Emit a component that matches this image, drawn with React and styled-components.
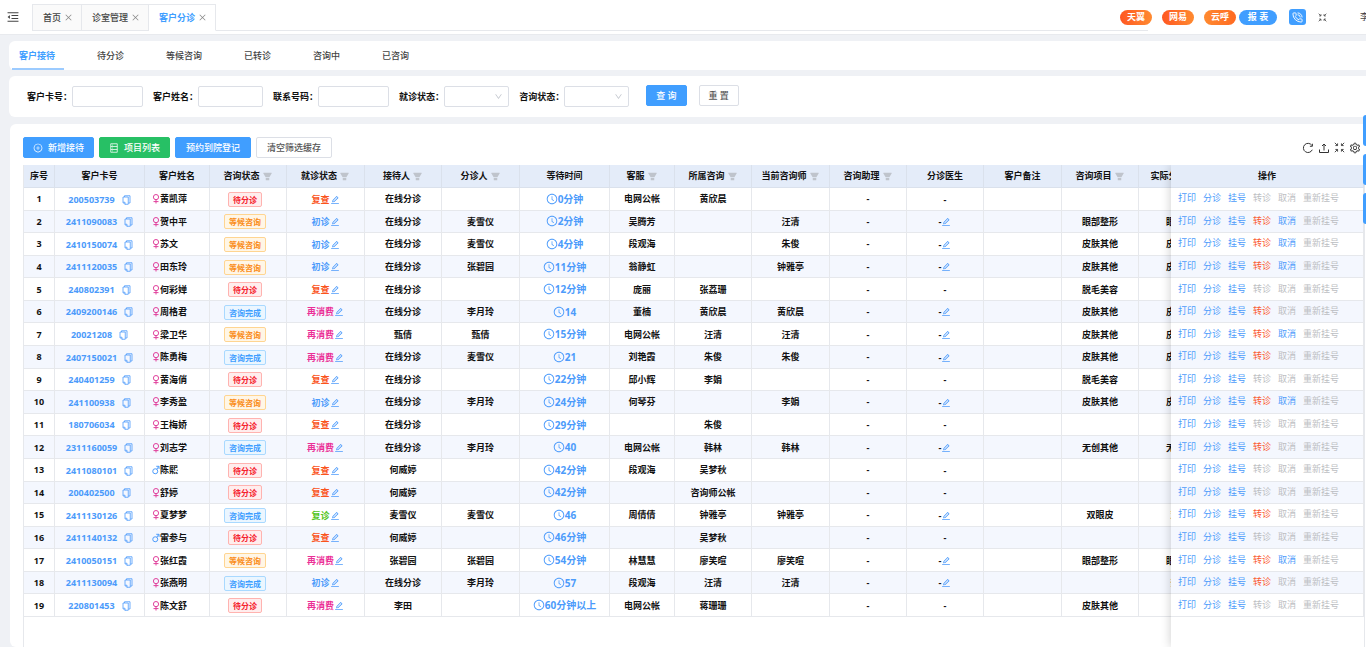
import React from 'react'
import styled, { createGlobalStyle, css } from 'styled-components'
import {
    AiFillFilter,
    AiOutlineClockCircle,
    AiOutlineClose,
    AiOutlineDown,
    AiOutlineEdit,
    AiOutlineMenuFold,
    AiOutlinePlusCircle,
    AiOutlineSetting
} from 'react-icons/ai'
import { PhoneCall } from 'lucide-react'

const BLUE = '#409eff';
const LINK = '#4c9bfb';
const BORDER = '#e6e8ec';

const GlobalStyle = createGlobalStyle`
    * {
        box-sizing: border-box;
    }

    body {
        margin: 0;
        overflow: hidden;
        background: #eff1f5;
        color: #111;
        font-family: 'Noto Sans', 'Noto Sans CJK SC', sans-serif;
        font-size: 9px;
        line-height: 14px;
    }

    button, input, select {
        margin: 0;
        padding: 0;
        border: 0;
        background: none;
        color: inherit;
        font: inherit;
    }

    svg {
        display: block;
        flex: none;
    }
`;

const Page = styled.div`
    display: flex;
    flex-direction: column;
    min-height: 100vh;
`;

/* top bar */

const TopBar = styled.header`
    display: flex;
    align-items: flex-start;
    height: 35px;
    padding: 4px 0 0 6px;
    overflow: hidden;
    background: #fff;
    border-bottom: 1px solid #e8eaee;
`;

const FoldButton = styled.button`
    padding: 6px 0;
    margin-right: 12px;
    color: #444;
`;

const PageTabs = styled.nav`
    display: flex;
    flex: 1;
    height: 27px;
    border-bottom: 1px solid ${BORDER};
`;

const PageTab = styled.div`
    display: flex;
    align-items: center;
    gap: 3px;
    height: 27px;
    padding: 0 8px 0 10px;
    border: 1px solid ${BORDER};
    border-left-width: ${props => props.$first ? '1px' : 0};
    border-bottom-color: ${props => props.$active ? '#fff' : BORDER};
    background: ${props => props.$active ? '#fff' : '#fafafa'};
    color: ${props => props.$active ? BLUE : '#444'};
    font-weight: ${props => props.$active ? 700 : 500};

    svg {
        color: #888;
    }
`;

const TopActions = styled.div`
    display: flex;
    align-items: center;
    flex: none;
    width: 246px;
    height: 26px;
    margin-left: -28px;
    overflow: hidden;
    white-space: nowrap;
`;

const Pill = styled.button`
    flex: none;
    width: ${props => props.$wide ? '38px' : '32px'};
    height: 15px;
    margin-right: ${props => props.$gap}px;
    border-radius: 8px;
    background: ${props => props.$bg};
    color: #fff;
    font-weight: 700;
`;

const PhoneButton = styled.button`
    display: flex;
    align-items: center;
    justify-content: center;
    flex: none;
    width: 17px;
    height: 16px;
    margin-right: 12px;
    border-radius: 3px;
    background: ${BLUE};
    color: #fff;
`;

const IconButton = styled.button`
    flex: none;
    color: #333;
`;

const UserName = styled.span`
    flex: none;
    margin-left: 33px;
    color: #444;
`;

/* cards */

const Card = styled.section`
    margin: 6px 0 0 9px;
    background: #fff;
    border-radius: 6px 0 0 6px;
`;

const StatusTabs = styled(Card)`
    display: flex;
    gap: 26px;
    height: 29px;
    padding-left: 3px;
`;

const StatusTab = styled.button`
    height: 29px;
    padding: 2px 9px 0 7px;
    border-bottom: 2px solid ${props => props.$active ? '#9ccbff' : 'transparent'};
    color: ${props => props.$active ? BLUE : '#444'};
    font-weight: ${props => props.$active ? 700 : 500};
`;

const SearchForm = styled.form`
    display: flex;
    align-items: center;
    height: 41px;
    padding-left: 18px;
`;

const Field = styled.div`
    display: flex;
    align-items: center;
    margin-right: 10px;

    label {
        font-weight: 700;
    }
`;

const control = css`
    height: 21px;
    border: 1px solid #dcdfe6;
    border-radius: 2px;
    background: #fff;
`;

const TextInput = styled.input`
    ${control}
    width: ${props => props.$narrow ? '65px' : '71px'};
    padding: 0 5px;
`;

const SelectWrap = styled.div`
    position: relative;
    color: #c0c4cc;

    svg {
        position: absolute;
        top: 6px;
        right: 6px;
        pointer-events: none;
    }
`;

const SelectBox = styled.select`
    ${control}
    display: block;
    width: 65px;
    padding: 0 5px;
    appearance: none;
`;

const Button = styled.button`
    display: flex;
    align-items: center;
    justify-content: center;
    gap: 5px;
    height: 21px;
    padding: 0 ${props => props.$tight ? '9px' : '10px'};
    border: 1px solid ${props => props.$bg || '#dcdfe6'};
    border-radius: 2px;
    background: ${props => props.$bg || '#fff'};
    color: ${props => props.$bg ? '#fff' : '#555'};
    font-weight: 500;
`;

const FormButtons = styled.div`
    display: flex;
    gap: 12px;
    margin: 0 0 2px 7px;
`;

const TableCard = styled(Card)`
    display: flex;
    flex: 1;
    flex-direction: column;
    margin: 7px 0 0 10px;
    padding: 13px 1px 0 13px;
`;

const Toolbar = styled.div`
    display: flex;
    align-items: center;
    gap: 5px;
    margin-bottom: 7px;
`;

const ToolIcons = styled.div`
    display: flex;
    align-items: center;
    gap: 4px;
    margin-left: auto;
    padding-right: 4px;
`;

/* table */

const Grid = styled.div`
    display: flex;
    flex: 1;
    overflow: hidden;
    border: solid ${BORDER};
    border-width: 0 1px 0 1px;
`;

const GridMain = styled.div`
    flex: 1;
    min-width: 0;
    overflow: hidden;
`;

const GridFixed = styled.div`
    position: relative;
    flex: none;
    width: 193px;
    background: #fff;
    box-shadow: 0 0 10px rgba(0, 0, 0, 0.2);
`;

const Table = styled.table`
    width: ${props => props.$full ? '100%' : '1206px'};
    height: 452px;
    table-layout: fixed;
    border-spacing: 0;
    white-space: nowrap;

    th, td {
        height: 22px;
        padding: 0;
        border-right: 1px solid ${BORDER};
        border-bottom: 1px solid ${BORDER};
        text-align: center;
        font-weight: 700;
    }

    td {
        padding-top: 1px;
    }

    th {
        height: 23px;
        background: #e4ecf9;
        border-color: #dae1ec;
    }

    tbody tr:nth-child(even) {
        background: #f4f7fe;
    }
`;

const Inline = styled.span`
    display: inline-flex;
    align-items: center;
    gap: ${props => props.$gap || 0}px;
    vertical-align: middle;
    color: ${props => props.$color || 'inherit'};
`;

const FilterIcon = styled(AiFillFilter)`
    color: #bfc4cc;
`;

const CardLink = styled.a`
    color: ${LINK};
    text-decoration: none;
`;

const WaitTime = styled(Inline)`
    padding-bottom: 1px;
    color: ${LINK};
    font-size: 10px;
`;

const NameCell = styled.div`
    display: flex;
    align-items: center;
    padding-left: 7px;
`;

const TAGS = {
    待分诊: ['#f5222d', '#ffeded', '#ffb3b0'],
    等候咨询: ['#fa8c16', '#fff6e6', '#ffd591'],
    咨询完成: ['#409eff', '#ebf6ff', '#a9d9ff']
};

const Tag = styled.span`
    display: inline-block;
    height: 15px;
    padding: 0 4px;
    margin-right: 6px;
    border: 1px solid ${props => TAGS[props.$kind][2]};
    border-radius: 2px;
    background: ${props => TAGS[props.$kind][1]};
    color: ${props => TAGS[props.$kind][0]};
    font-size: 8px;
    line-height: 13px;
    vertical-align: middle;
`;

const RowActions = styled.div`
    display: flex;
    gap: 7px;
    padding: 0 0 2px 7px;
    font-weight: 400;
`;

const RowAction = styled.button`
    color: ${props => props.$danger ? '#fb5a30' : LINK};
    line-height: 14px;

    &:disabled {
        color: #bcbec2;
    }
`;

const SideDock = styled.aside`
    position: fixed;
    top: 115px;
    right: 0;
    display: flex;
    flex-direction: column;
    gap: 8px;
`;

const SideTab = styled.button`
    width: 3px;
    height: 31px;
    border-radius: 3px 0 0 3px;
    background: ${BLUE};
`;

/* icons */

const FemaleIcon = () => (
    <svg width="8" height="10" viewBox="0 0 16 20" fill="none" stroke="#e0409c" strokeWidth="2">
        <circle cx="8" cy="6.2" r="5.2" />
        <path d="M8 11.4V19M3 15.2H13" />
    </svg>
);

const MaleIcon = () => (
    <svg width="8" height="10" viewBox="0 0 16 20" fill="none" stroke={LINK} strokeWidth="2">
        <circle cx="6.5" cy="12.5" r="5" />
        <path d="M9.5 8.5L13.5 3M8.5 2.6H14V8" />
    </svg>
);

const CopyIcon = () => (
    <svg width="9" height="10" viewBox="0 0 18 20" fill="none" stroke={LINK} strokeWidth="1.6">
        <path d="M5 4V1.5H16V16H13" />
        <path d="M2 4H12.5V18.5H5.5L2 15Z" />
        <path d="M2 14.5H6V18.5" />
    </svg>
);

const ListIcon = () => (
    <svg width="10" height="10" viewBox="0 0 20 20" fill="none" stroke="#fff" strokeWidth="1.5">
        <path d="M3.5 1.5H16.5V18.5H3.5ZM3.5 7H16.5M3.5 13H16.5M6.5 4.3H8M6.5 10H8M6.5 15.8H8" />
    </svg>
);

const ExpandIcon = ({ size }) => (
    <svg width={size} height={size} viewBox="0 0 20 20" fill="none" stroke="currentColor" strokeWidth="1.6">
        <path d="M1.5 1.5L6 6M18.5 1.5L14 6M1.5 18.5L6 14M18.5 18.5L14 14" />
        <path d="M2.5 6.5H6.5V2.5M17.5 6.5H13.5V2.5M2.5 13.5H6.5V17.5M17.5 13.5H13.5V17.5" />
    </svg>
);

const RefreshIcon = () => (
    <svg width="12" height="12" viewBox="0 0 24 24" fill="none" stroke="currentColor" strokeWidth="2">
        <path d="M20.5 15.5A9.2 9.2 0 1 1 19.5 6.5" />
        <path d="M20.8 3.5V8.5H15.8" />
    </svg>
);

const ExportIcon = () => (
    <svg width="12" height="12" viewBox="0 0 24 24" fill="none" stroke="currentColor" strokeWidth="2">
        <path d="M3 15V21H21V15M12 17V4M8 8L12 4L16 8" />
    </svg>
);

/* data */

const columns = [
    ['序号', 31],
    ['客户卡号', 90],
    ['客户姓名', 65],
    ['咨询状态', 77, true],
    ['就诊状态', 78, true],
    ['接待人', 77, true],
    ['分诊人', 78, true],
    ['等待时间', 90],
    ['客服', 65, true],
    ['所属咨询', 77, true],
    ['当前咨询师', 78, true],
    ['咨询助理', 77, true],
    ['分诊医生', 77],
    ['客户备注', 78],
    ['咨询项目', 77, true],
    ['实际分诊项目', 91, true]
];

const W = '待分诊', Q = '等候咨询', D = '咨询完成';
const ZX = '在线分诊';

// card, name, male, status, visit, receptionist, triage, wait, service, owner, consultant, item, actual item
const rows = [
    ['200503739', '黄凯萍', 0, W, '复查', ZX, '', '0分钟', '电网公帐', '黄欣晨', '', '', ''],
    ['2411090083', '贺中平', 0, Q, '初诊', ZX, '麦雪仪', '2分钟', '吴腾芳', '', '汪清', '眼部整形', '眼部整形'],
    ['2410150074', '苏文', 0, Q, '初诊', ZX, '麦雪仪', '4分钟', '段观海', '', '朱俊', '皮肤其他', '皮肤其他'],
    ['2411120035', '田东玲', 0, Q, '初诊', ZX, '张碧园', '11分钟', '翁静虹', '', '钟雅亭', '皮肤其他', '皮肤其他'],
    ['240802391', '何彩婵', 0, W, '复查', ZX, '', '12分钟', '庞丽', '张荔珊', '', '脱毛美容', ''],
    ['2409200146', '周格君', 0, D, '再消费', ZX, '李月玲', '14', '董楠', '黄欣晨', '黄欣晨', '皮肤其他', '皮肤其他'],
    ['20021208', '梁卫华', 0, Q, '再消费', '甄倩', '甄倩', '15分钟', '电网公帐', '汪清', '汪清', '皮肤其他', '皮肤其他'],
    ['2407150021', '陈勇梅', 0, D, '再消费', ZX, '麦雪仪', '21', '刘艳霞', '朱俊', '朱俊', '皮肤其他', '皮肤其他'],
    ['240401259', '黄海俏', 0, W, '复查', ZX, '', '22分钟', '邱小辉', '李娟', '', '脱毛美容', ''],
    ['241100938', '李秀盈', 0, Q, '初诊', ZX, '李月玲', '24分钟', '何琴芬', '', '李娟', '皮肤其他', '皮肤其他'],
    ['180706034', '王梅娇', 0, W, '复查', ZX, '', '29分钟', '', '朱俊', '', '', ''],
    ['2311160059', '刘志学', 0, D, '再消费', ZX, '李月玲', '40', '电网公帐', '韩林', '韩林', '无创其他', '无创其他'],
    ['2411080101', '陈熙', 1, W, '复查', '何威婷', '', '42分钟', '段观海', '吴梦秋', '', '', ''],
    ['200402500', '舒婷', 0, W, '复查', '何威婷', '', '42分钟', '', '咨询师公帐', '', '', ''],
    ['2411130126', '夏梦梦', 0, D, '复诊', '麦雪仪', '麦雪仪', '46', '周倩倩', '钟雅亭', '钟雅亭', '双眼皮', '双眼皮'],
    ['2411140132', '雷参与', 1, W, '复查', '何威婷', '', '46分钟', '', '吴梦秋', '', '', ''],
    ['2410050151', '张红霞', 0, Q, '再消费', '张碧园', '张碧园', '54分钟', '林慧慧', '廖笑暄', '廖笑暄', '眼部整形', '眼部整形'],
    ['2411130094', '张燕明', 0, D, '初诊', ZX, '李月玲', '57', '段观海', '汪清', '汪清', '', '热玛吉'],
    ['220801453', '陈文舒', 0, W, '再消费', '李田', '', '60分钟以上', '电网公帐', '蒋珊珊', '', '皮肤其他', '']
];

const visitColors = { 复查: '#fa541c', 初诊: LINK, 再消费: '#eb2f96', 复诊: '#52c41a' };

const fields = [
    { id: 'card', label: '客户卡号' },
    { id: 'name', label: '客户姓名', narrow: true },
    { id: 'phone', label: '联系号码' },
    { id: 'visit', label: '就诊状态', select: true },
    { id: 'consult', label: '咨询状态', select: true }
];

function Row({ row, index }) {
    const [card, name, male, status, visit, receptionist, triage, wait, service, owner, consultant, item, actual] = row;

    return (
        <tr>
            <td>{index + 1}</td>
            <td>
                <Inline $gap={7}><CardLink href="#">{card}</CardLink><CopyIcon /></Inline>
            </td>
            <td>
                <NameCell>
                    {male ? <MaleIcon /> : <FemaleIcon />}
                    {name}
                </NameCell>
            </td>
            <td><Tag $kind={status}>{status}</Tag></td>
            <td>
                <Inline $color={visitColors[visit]}>{visit}<AiOutlineEdit size={10} color={LINK} /></Inline>
            </td>
            <td>{receptionist}</td>
            <td>{triage}</td>
            <td><WaitTime><AiOutlineClockCircle size={12} />{wait}</WaitTime></td>
            <td>{service}</td>
            <td>{owner}</td>
            <td>{consultant}</td>
            <td>-</td>
            <td><Inline>-{status !== W && <AiOutlineEdit size={10} color={LINK} />}</Inline></td>
            <td />
            <td>{item}</td>
            <td>{actual}</td>
        </tr>
    );
}

function App() {
    return (
        <Page>
            <GlobalStyle />
            <TopBar>
                <FoldButton aria-label="fold"><AiOutlineMenuFold size={14} /></FoldButton>
                <PageTabs>
                    <PageTab $first>首页<AiOutlineClose size={9} /></PageTab>
                    <PageTab>诊室管理<AiOutlineClose size={9} /></PageTab>
                    <PageTab $active>客户分诊<AiOutlineClose size={9} /></PageTab>
                </PageTabs>
                <TopActions>
                    <Pill $bg="linear-gradient(90deg, #ff5722, #ff8a30)" $gap={10}>天翼</Pill>
                    <Pill $bg="linear-gradient(90deg, #ff5722, #ff8a30)" $gap={10}>网易</Pill>
                    <Pill $bg="linear-gradient(90deg, #ff8a30, #ff6a22)" $gap={3}>云呼</Pill>
                    <Pill $bg={BLUE} $gap={12} $wide>报 表</Pill>
                    <PhoneButton aria-label="phone"><PhoneCall size={11} strokeWidth={2} /></PhoneButton>
                    <IconButton aria-label="fullscreen"><ExpandIcon size={9} /></IconButton>
                    <UserName>李</UserName>
                </TopActions>
            </TopBar>

            <StatusTabs>
                {['客户接待', '待分诊', '等候咨询', '已转诊', '咨询中', '已咨询'].map((text, i) => (
                    <StatusTab key={text} $active={i === 0}>{text}</StatusTab>
                ))}
            </StatusTabs>

            <Card>
                <SearchForm>
                    {fields.map(({ id, label, narrow, select }) => (
                        <Field key={id}>
                            <label htmlFor={id}>{label}：</label>
                            {select ? (
                                <SelectWrap>
                                    <SelectBox id={id}><option value="" /></SelectBox>
                                    <AiOutlineDown size={9} />
                                </SelectWrap>
                            ) : <TextInput id={id} $narrow={narrow} />}
                        </Field>
                    ))}
                    <FormButtons>
                        <Button type="button" $tight $bg={BLUE}>查 询</Button>
                        <Button type="button" $tight>重 置</Button>
                    </FormButtons>
                </SearchForm>
            </Card>

            <TableCard>
                <Toolbar>
                    <Button $tight $bg={BLUE}><AiOutlinePlusCircle size={10} />新增接待</Button>
                    <Button $tight $bg="#27c065"><ListIcon />项目列表</Button>
                    <Button $bg={BLUE}>预约到院登记</Button>
                    <Button>清空筛选缓存</Button>
                    <ToolIcons>
                        <IconButton aria-label="refresh"><RefreshIcon /></IconButton>
                        <IconButton aria-label="export"><ExportIcon /></IconButton>
                        <IconButton aria-label="zoom"><ExpandIcon size={11} /></IconButton>
                        <IconButton aria-label="settings"><AiOutlineSetting size={12} /></IconButton>
                    </ToolIcons>
                </Toolbar>

                <Grid>
                    <GridMain>
                        <Table>
                            <colgroup>
                                {columns.map(([title, width]) => <col key={title} width={width} />)}
                            </colgroup>
                            <thead>
                                <tr>
                                    {columns.map(([title, , filter]) => (
                                        <th key={title}>
                                            <Inline $gap={2}>{title}{filter && <FilterIcon size={11} />}</Inline>
                                        </th>
                                    ))}
                                </tr>
                            </thead>
                            <tbody>
                                {rows.map((row, i) => <Row key={row[0]} row={row} index={i} />)}
                            </tbody>
                        </Table>
                    </GridMain>
                    <GridFixed>
                        <Table $full>
                            <thead>
                                <tr><th>操作</th></tr>
                            </thead>
                            <tbody>
                                {rows.map(row => (
                                    <tr key={row[0]}>
                                        <td>
                                            <RowActions>
                                                <RowAction>打印</RowAction>
                                                <RowAction>分诊</RowAction>
                                                <RowAction>挂号</RowAction>
                                                <RowAction $danger disabled={row[3] === W}>转诊</RowAction>
                                                <RowAction disabled={row[3] !== Q}>取消</RowAction>
                                                <RowAction disabled>重新挂号</RowAction>
                                            </RowActions>
                                        </td>
                                    </tr>
                                ))}
                            </tbody>
                        </Table>
                    </GridFixed>
                </Grid>
            </TableCard>

            <SideDock>
                <SideTab aria-label="side 1" />
                <SideTab aria-label="side 2" />
                <SideTab aria-label="side 3" />
            </SideDock>
        </Page>
    );
}

export default App;
